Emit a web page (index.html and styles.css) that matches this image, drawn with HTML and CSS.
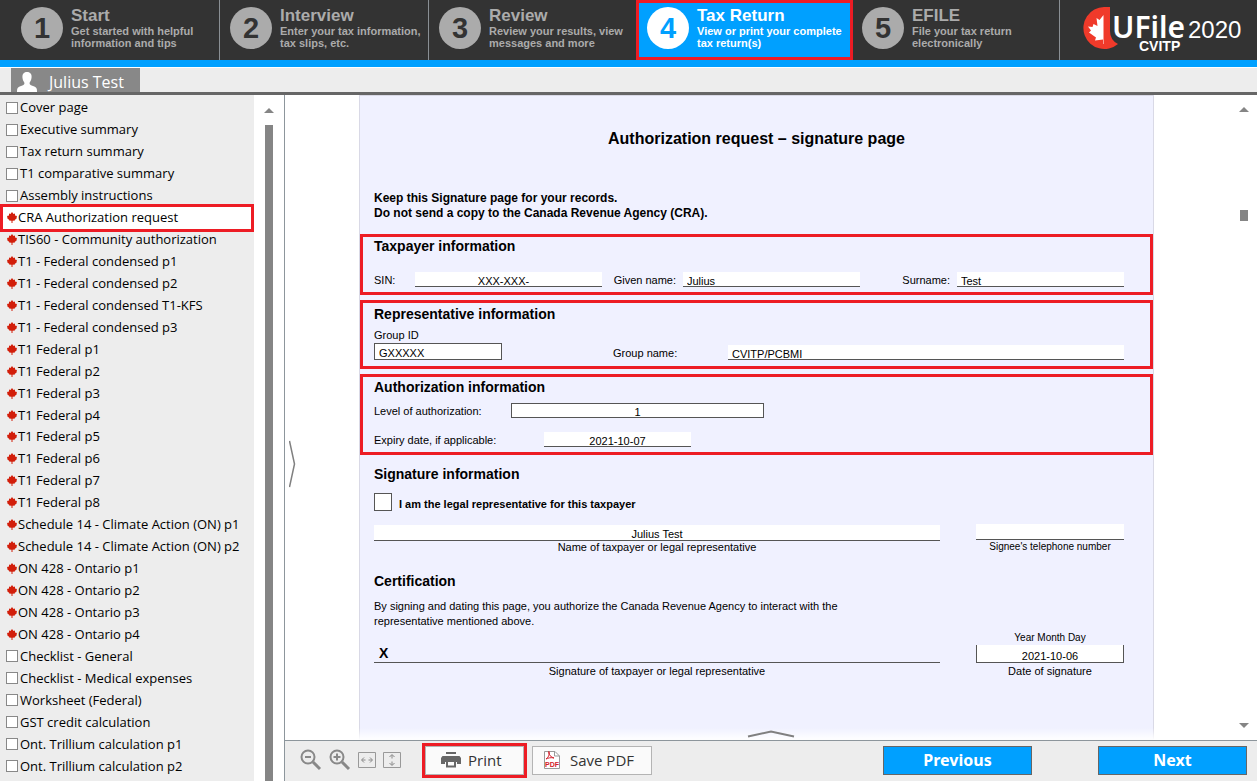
FILE: index.html
```html
<!DOCTYPE html>
<html lang="en">
<head>
<meta charset="utf-8">
<title>UFile CVITP 2020 - Tax Return</title>
<link rel="stylesheet" href="styles.css">
</head>
<body>
<svg class="defs" aria-hidden="true">
  <symbol id="leaf" viewBox="0 0 20 22"><path d="M10 0l3 4 3-1v4l4 1-1 3 1 1-4.500 4 .5 1-5 .400V22H9v-4.600L4 17l.5-1L0 12l1-1-1-3 4-1V3l3 1z"/></symbol>
</svg>
<header class="steps">
  <a class="step" href="#"><span class="num">1</span><span class="step-text"><b>Start</b><span>Get started with helpful<br>information and tips</span></span></a>
  <a class="step" href="#"><span class="num">2</span><span class="step-text"><b>Interview</b><span>Enter your tax information,<br>tax slips, etc.</span></span></a>
  <a class="step" href="#"><span class="num">3</span><span class="step-text"><b>Review</b><span>Review your results, view<br>messages and more</span></span></a>
  <a class="step active" href="#" aria-current="step"><span class="num">4</span><span class="step-text"><b>Tax Return</b><span>View or print your complete<br>tax return(s)</span></span></a>
  <a class="step" href="#"><span class="num">5</span><span class="step-text"><b>EFILE</b><span>File your tax return<br>electronically</span></span></a>
  <div class="brand">
    <svg width="164" height="52" viewBox="0 0 164 52" role="img" aria-label="UFile CVITP 2020">
      <path d="M27 4H21A21 21 0 1 0 35 41Q27 37 27 28Z" fill="#f03a2a"/>
      <path d="M20.500 12l-4 5-3-2 1 8-4-2-1 3-4.500-.5 3 4-2 2 7 5-1 3 8-1v4.500h.5z" fill="#fff"/>
      <text class="logo-name" x="29" y="35">UFile</text>
      <text class="logo-sub" x="56" y="48">CVITP</text>
      <text class="logo-year" x="105" y="35">2020</text>
    </svg>
  </div>
</header>
<nav class="tabs">
  <a class="tab" href="#">
    <svg width="20" height="20" viewBox="0 0 20 20"><path d="M10 0C6.500 0 5 2.500 5.500 6c.3 2.500 1.500 3.500 2 5-.2 2-1.500 2.200-3.500 3C1 15 0 16 0 19v1h20v-1c0-3-1-4-4-5-2-.8-3.300-1-3.500-3 .5-1.500 1.700-2.500 2-5C15 2.500 13.500 0 10 0z" fill="#fff"/></svg>
    <span>Julius Test</span>
  </a>
</nav>
<div class="work">
  <aside class="side">
    <ul class="list">
      <li><label><input type="checkbox">Cover page</label></li>
      <li><label><input type="checkbox">Executive summary</label></li>
      <li><label><input type="checkbox">Tax return summary</label></li>
      <li><label><input type="checkbox">T1 comparative summary</label></li>
      <li><label><input type="checkbox">Assembly instructions</label></li>
      <li class="current"><a href="#"><svg><use href="#leaf"/></svg>CRA Authorization request</a></li>
      <li><a href="#"><svg><use href="#leaf"/></svg>TIS60 - Community authorization</a></li>
      <li><a href="#"><svg><use href="#leaf"/></svg>T1 - Federal condensed p1</a></li>
      <li><a href="#"><svg><use href="#leaf"/></svg>T1 - Federal condensed p2</a></li>
      <li><a href="#"><svg><use href="#leaf"/></svg>T1 - Federal condensed T1-KFS</a></li>
      <li><a href="#"><svg><use href="#leaf"/></svg>T1 - Federal condensed p3</a></li>
      <li><a href="#"><svg><use href="#leaf"/></svg>T1 Federal p1</a></li>
      <li><a href="#"><svg><use href="#leaf"/></svg>T1 Federal p2</a></li>
      <li><a href="#"><svg><use href="#leaf"/></svg>T1 Federal p3</a></li>
      <li><a href="#"><svg><use href="#leaf"/></svg>T1 Federal p4</a></li>
      <li><a href="#"><svg><use href="#leaf"/></svg>T1 Federal p5</a></li>
      <li><a href="#"><svg><use href="#leaf"/></svg>T1 Federal p6</a></li>
      <li><a href="#"><svg><use href="#leaf"/></svg>T1 Federal p7</a></li>
      <li><a href="#"><svg><use href="#leaf"/></svg>T1 Federal p8</a></li>
      <li><a href="#"><svg><use href="#leaf"/></svg>Schedule 14 - Climate Action (ON) p1</a></li>
      <li><a href="#"><svg><use href="#leaf"/></svg>Schedule 14 - Climate Action (ON) p2</a></li>
      <li><a href="#"><svg><use href="#leaf"/></svg>ON 428 - Ontario p1</a></li>
      <li><a href="#"><svg><use href="#leaf"/></svg>ON 428 - Ontario p2</a></li>
      <li><a href="#"><svg><use href="#leaf"/></svg>ON 428 - Ontario p3</a></li>
      <li><a href="#"><svg><use href="#leaf"/></svg>ON 428 - Ontario p4</a></li>
      <li><label><input type="checkbox">Checklist - General</label></li>
      <li><label><input type="checkbox">Checklist - Medical expenses</label></li>
      <li><label><input type="checkbox">Worksheet (Federal)</label></li>
      <li><label><input type="checkbox">GST credit calculation</label></li>
      <li><label><input type="checkbox">Ont. Trillium calculation p1</label></li>
      <li><label><input type="checkbox">Ont. Trillium calculation p2</label></li>
    </ul>
    <div class="side-scroll"><i class="arrow-up"></i><i class="side-thumb"></i></div>
  </aside>
  <main class="main">
    <div class="viewer">
      <button class="handle-left" aria-label="Toggle list"><svg width="7" height="48" viewBox="0 0 7 48"><path d="M.5 1L5.500 24 .5 47" fill="none" stroke="#808080" stroke-width="1.500"/></svg></button>
      <form class="page">
        <h1>Authorization request – signature page</h1>
        <p class="keep">Keep this Signature page for your records.<br>Do not send a copy to the Canada Revenue Agency (CRA).</p>
        <section class="box taxpayer">
          <h2>Taxpayer information</h2>
          <div class="row three">
            <label for="sin">SIN:</label><input id="sin" class="field center masked" value="XXX-XXX-">
            <label for="given">Given name:</label><input id="given" class="field" value="Julius">
            <label for="sur">Surname:</label><input id="sur" class="field" value="Test">
          </div>
        </section>
        <section class="box representative">
          <h2>Representative information</h2>
          <label for="gid" class="group-label">Group ID</label>
          <div class="row group">
            <input id="gid" class="field framed" value="GXXXXX">
            <label for="gname">Group name:</label><input id="gname" class="field" value="CVITP/PCBMI">
          </div>
        </section>
        <section class="box authorization">
          <h2>Authorization information</h2>
          <div class="row level"><label for="level">Level of authorization:</label><input id="level" class="field framed center" value="1"></div>
          <div class="row expiry"><label for="exp">Expiry date, if applicable:</label><input id="exp" class="field center" value="2021-10-07"></div>
        </section>
        <section class="plain">
          <h2>Signature information</h2>
          <label class="legal"><input type="checkbox"><span>I am the legal representative for this taxpayer</span></label>
          <div class="sign">
            <div class="cell"><input id="name" class="field center" value="Julius Test"><label for="name">Name of taxpayer or legal representative</label></div>
            <div class="cell"><input id="tel" class="field center" value=""><label for="tel" class="small">Signee's telephone number</label></div>
          </div>
          <h2>Certification</h2>
          <p class="cert">By signing and dating this page, you authorize the Canada Revenue Agency to interact with the<br>representative mentioned above.</p>
          <div class="sign last">
            <div class="cell"><div class="mark">X</div><span>Signature of taxpayer or legal representative</span></div>
            <div class="cell"><span class="small">Year Month Day</span><input id="date" class="field cup center" value="2021-10-06"><label for="date">Date of signature</label></div>
          </div>
        </section>
      </form>
      <div class="doc-scroll"><i class="arrow-up"></i><i class="doc-thumb"></i><i class="arrow-down"></i></div>
      <div class="fade"><button aria-label="Show panel"><svg width="48" height="8" viewBox="0 0 48 8"><path d="M1 6.500L24 1.500l23 5" fill="none" stroke="#808080" stroke-width="2"/></svg></button></div>
    </div>
    <footer class="bar">
      <div class="zooms">
        <button aria-label="Zoom out"><svg width="22" height="22" viewBox="0 0 22 22"><circle cx="8" cy="8" r="6.500"/><path d="M5 8h6"/><path class="thick" d="M13 13l7 7"/></svg></button>
        <button aria-label="Zoom in"><svg width="22" height="22" viewBox="0 0 22 22"><circle cx="8" cy="8" r="6.500"/><path d="M4.500 8h7M8 4.500v7"/><path class="thick" d="M13 13l7 7"/></svg></button>
        <button aria-label="Fit width"><svg width="18" height="18" viewBox="0 0 18 18"><path class="thin" d="M.5 1.500h17v15H.5z"/><path class="fit" d="M6 6.500L3.500 9 6 11.500M12 6.500L14.500 9 12 11.500M4 9h3.500M10.500 9H14"/></svg></button>
        <button aria-label="Fit height"><svg width="18" height="18" viewBox="0 0 18 18"><path class="thin" d="M.5 1.500h17v15H.5z"/><path class="fit" d="M6.500 6L9 3.500 11.500 6M6.500 12L9 14.500l2.500-2.500M9 4v3.500M9 10.500V14"/></svg></button>
      </div>
      <div class="print-mark"><button class="tool print"><svg width="20" height="18" viewBox="0 0 20 18"><path fill="#666" d="M5 1h10v2H5zM1.500 5h17L20 7v6h-4v-2H4v2H0V7z"/><path d="M6 10h8v5.500H6z" fill="#fafafa" stroke="#666" stroke-width="2"/></svg>Print</button></div>
      <button class="tool pdf"><svg width="18" height="20" viewBox="0 0 18 20"><path d="M1.500 18.500V1.500h10.500l4.500 4.500v12.500z" fill="#fff" stroke="#999"/><path d="M11.500 1.500V6h5" fill="none" stroke="#999"/><path d="M3 9c3-2 4-6 3-7.500-1.500 0 0 5 5 6.500-3-.8-6 0-8 1z" fill="none" stroke="#d3202b"/><text x="2" y="17" class="pdf-word">PDF</text></svg>Save PDF</button>
      <button class="go previous">Previous</button>
      <button class="go">Next</button>
    </footer>
  </main>
</div>
</body>
</html>
```
FILE: styles.css
```css
* { box-sizing: border-box; }
body { margin: 0; height: 100vh; display: flex; flex-direction: column; overflow: hidden; font-family: "Open Sans", "Noto Sans", sans-serif; color: #000; background: #fff; }
a { color: inherit; text-decoration: none; }
button { font: inherit; color: inherit; margin: 0; padding: 0; border: 0; background: none; }
svg { display: block; flex: none; }
.defs { position: absolute; width: 0; height: 0; }

.steps { display: grid; grid-template-columns: 220fr 209fr 207fr 217fr 207fr 197fr; height: 67px; flex: none; background: #333; border-bottom: 7px solid #00a0ff; font-family: "Liberation Sans", Arial, sans-serif; }
.step { display: flex; align-items: flex-start; gap: 8px; padding: 7px 0 0 9px; border-right: 1px solid #8a8f94; color: #ababab; font-weight: bold; white-space: nowrap; overflow: hidden; }
.step:first-child { padding-left: 21px; }
.step:nth-child(2), .step:nth-child(3) { padding-left: 10px; }
.step:nth-child(3) { border-right: 0; }
.num { flex: none; width: 42px; height: 42px; border-radius: 50%; background: #ababab; color: #333; font-size: 29px; line-height: 42px; text-align: center; }
.step-text { display: flex; flex-direction: column; font-size: 11px; line-height: 12px; }
.step-text b { font-size: 17px; line-height: 18px; }
.step.active { background: #00a0ff; color: #fff; border: 3px solid #ed1c24; padding: 4px 0 0 8px; }
.active .num { background: #fff; color: #00a0ff; }
.brand { display: flex; justify-content: flex-end; padding: 3px 10px 0 0; }
.brand text { fill: #fff; }
.logo-name { font: 600 30px "Noto Sans", "Open Sans", sans-serif; }
.logo-sub { font: bold 14px "Liberation Sans", Arial, sans-serif; }
.logo-year { font: 24px "Liberation Sans", Arial, sans-serif; }

.tabs { display: flex; flex: none; height: 28px; padding-left: 11px; background: #ededed; border-top: 1px solid #fff; border-bottom: 3px solid #666; }
.tab { display: flex; align-items: center; gap: 12px; width: 129px; padding: 3px 0 0 6px; background: #888; color: #fff; font-size: 16px; white-space: nowrap; }

.work { flex: 1; min-height: 0; display: flex; }
.side { display: flex; flex: none; width: 285px; border-right: 1px solid #8d969c; }
.list { flex: 1; display: grid; grid-auto-rows: 1fr; margin: 0; padding: 2px 0 4px; list-style: none; background: #ededed; font-size: 13px; line-height: 21px; white-space: nowrap; }
.list li { position: relative; display: flex; align-items: center; }
.list a { display: flex; align-items: center; padding-left: 7px; gap: 1px; }
.list label { display: flex; align-items: center; padding-left: 6px; gap: 2px; }
.list svg { width: 10px; height: 11px; fill: #d21e0a; }
.list input, .legal input { appearance: none; margin: 0; background: #fff; border: 1px solid #888; width: 12px; height: 12px; flex: none; border-radius: 0; }
.current { background: #fff; }
.current::after { content: ""; position: absolute; inset: -3px 0; border: 3px solid #ed1c24; pointer-events: none; }
.side-scroll { width: 30px; display: flex; flex-direction: column; align-items: center; padding-top: 13px; gap: 12px; }
.side-thumb { flex: 1; width: 8px; background: #858585; }
.arrow-up, .arrow-down { border: 5px solid transparent; border-top: 0; border-bottom: 5px solid #858585; }
.arrow-down { border-bottom: 0; border-top: 5px solid #858585; }

.main { flex: 1; min-width: 0; display: flex; flex-direction: column; }
.viewer { flex: 1; min-height: 0; position: relative; display: flex; justify-content: space-between; overflow: hidden; }
.handle-left { align-self: center; width: 74px; padding: 93px 0 0 4px; }
.page { flex: 1; border: 1px solid #d9d9e6; background: #f0f1ff; font: 11px/14px "Liberation Sans", Arial, sans-serif; }
.page h1 { margin: 33px 0 42px; font-size: 16px; line-height: 20px; text-align: center; }
.keep { margin: 0 0 13px 14px; font-size: 12px; font-weight: bold; line-height: 15px; }
.page h2 { margin: 0; font-size: 14px; line-height: 18px; }
.box { border: 3px solid #ed1c24; padding: 0 26px 5px 11px; margin-bottom: 5px; }
.row { display: grid; align-items: end; }
.three { grid-template-columns: 41px 187fr 81px 177fr 97px 167fr; margin-top: 17px; }
.three label:not(:first-child) { text-align: right; padding-right: 7px; }
.field { width: 100%; min-width: 0; height: 15px; margin: 0; padding: 3px 4px 0; border: 0; border-bottom: 1px solid #555; border-radius: 0; background: #fff; color: #000; font: 11px/12px "Liberation Sans", Arial, sans-serif; }
.center { text-align: center; }
.masked { padding-right: 14px; }
.framed { border: 1px solid #555; }
.representative { padding-top: 2px; padding-bottom: 6px; }
.group-label { display: block; margin-top: 5px; }
.group { grid-template-columns: 128fr 226fr 396fr; margin-top: 1px; }
.group .framed { height: 17px; }
.group label { padding-left: 111px; }
.authorization { padding-top: 1px; margin-bottom: 0; }
.level { grid-template-columns: 137fr 253fr 360fr; margin-top: 7px; }
.level .framed { padding-top: 2px; }
.expiry { grid-template-columns: 170fr 147fr 433fr; margin-top: 14px; }
.plain { padding: 10px 29px 0 14px; }
.legal { display: flex; align-items: center; gap: 7px; margin: 10px 0 13px; font-weight: bold; }
.legal span { padding-top: 4px; }
.legal input { width: 18px; height: 18px; border-color: #555; }
.sign { display: grid; grid-template-columns: 566fr 148fr; column-gap: 36px; margin-bottom: 18px; align-items: end; }
.sign .field { height: 16px; }
.cell { display: flex; flex-direction: column; text-align: center; line-height: 13px; }
.small { font-size: 10px; line-height: 14px; }
.cert { margin: 9px 0 0; line-height: 15px; }
.last { margin-top: 2px; }
.last .cell > :last-child { margin-top: 2px; }
.last .cell .field { height: 18px; padding-top: 4px; }
.cup { border: 1px solid #555; border-top: 0; }
.mark { border-bottom: 1px solid #555; text-align: left; padding-left: 5px; font-size: 14px; font-weight: bold; line-height: 18px; }
.doc-scroll { width: 103px; display: flex; flex-direction: column; align-items: flex-end; padding: 12px 8px 12px 0; }
.doc-thumb { width: 8px; height: 11px; margin: 98px 1px auto 0; background: #858585; }
.fade { position: absolute; left: 0; right: 0; bottom: 0; height: 12px; display: flex; justify-content: center; align-items: center; background: linear-gradient(rgba(255,255,255,0), #fff); }

.bar { flex: none; height: 41px; display: flex; align-items: center; padding: 0 10px 2px 15px; background: #ededed; border-top: 1px solid #8d969c; font-size: 15px; color: #333; }
.zooms { display: flex; align-items: center; gap: 7px; width: 122px; }
.zooms svg { fill: none; stroke: #888; stroke-width: 2; }
.zooms .fit { stroke-width: 1; }
.zooms .thin { stroke: #999; stroke-width: 1; }
.zooms .thick { stroke-width: 3; }
.print-mark { border: 3px solid #ed1c24; margin-right: 5px; }
.tool { display: flex; align-items: center; height: 29px; border: 1px solid #b4b4b4; background: #fafafa; white-space: nowrap; }
.print { width: 99px; padding-left: 15px; gap: 7px; }
.pdf { width: 120px; padding-left: 10px; gap: 9px; }
.pdf-word { font: bold 7px "Liberation Sans", Arial, sans-serif; fill: #d3202b; }
.go { width: 149px; height: 29px; background: #00a0ff; border: 1px solid #666; color: #fff; font: bold 16px "Noto Sans", sans-serif; }
.previous { margin: 0 66px 0 auto; }
```
